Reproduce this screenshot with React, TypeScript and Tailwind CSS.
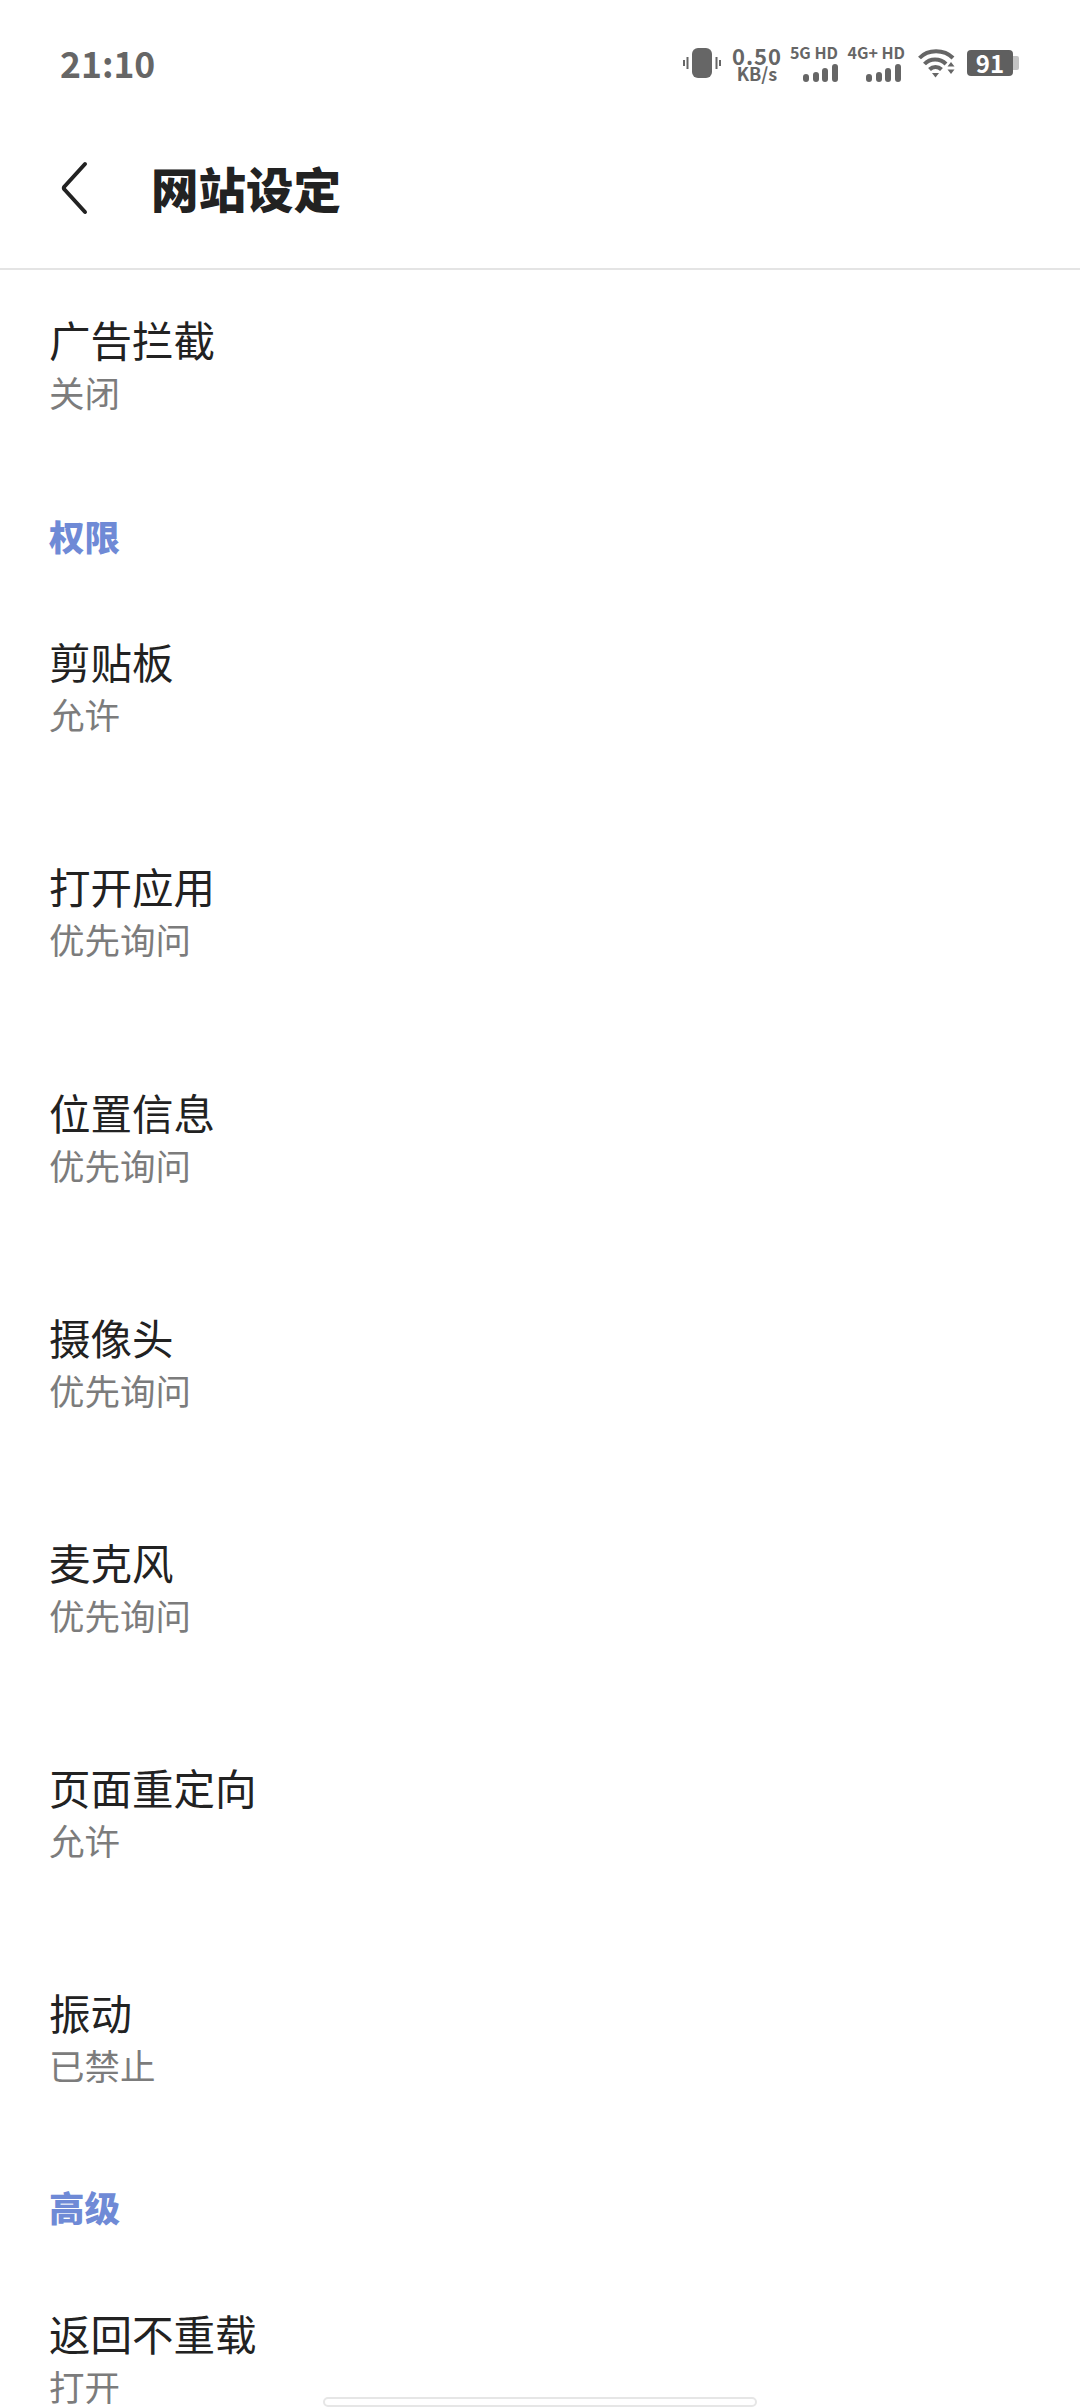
function Bars() {
  return (
    <svg width="35" height="18" viewBox="0 0 35 18" className="block" fill="#666">
      <rect x="0" y="10" width="6" height="8" rx="3" />
      <rect x="10" y="8" width="6" height="10" rx="3" />
      <rect x="19" y="4" width="6" height="14" rx="3" />
      <rect x="29" y="0" width="6" height="18" rx="3" />
    </svg>
  );
}

function Net({ label, className, barClass }: { label: string; className: string; barClass: string }) {
  return (
    <div className={`flex flex-col items-end ${className}`}>
      <div className="text-[16px] leading-[15px] font-bold text-[#666] whitespace-nowrap">{label}</div>
      <div className={`mt-[4px] ${barClass}`}><Bars /></div>
    </div>
  );
}

function StatusBar() {
  return (
    <div className="h-[90px] pl-[60px] pr-[61px] pt-[42px] flex justify-between items-start">
      <div className="text-[35.500px] leading-[42px] font-bold text-[#666]">21:10</div>
      <div className="flex items-center h-[42px]">
        <svg width="38" height="32" viewBox="0 0 38 32" fill="none" className="block">
          <rect x="9" y="1" width="20" height="30" rx="6" fill="#666" />
          <path d="M4.500 10v12M1 13v6M33.500 10v12M37 13v6" stroke="#666" strokeWidth="2" />
        </svg>
        <div className="ml-[11px] flex flex-col items-center w-[50px]">
          <div className="text-[22px] leading-[19px] font-bold text-[#666] tracking-[1px]">0.50</div>
          <div className="text-[18px] leading-[16px] font-bold text-[#666]">KB/s</div>
        </div>
        <Net label="5G HD" className="ml-[10px] w-[46px]" barClass="mr-0" />
        <Net label="4G+ HD" className="ml-[11px] w-[56px]" barClass="mr-[4px]" />
        <svg width="38" height="30" viewBox="0 0 38 30" fill="none" className="block ml-[13px]">
          <path d="M1.500 10C10 1 26 1 35 10" stroke="#666" strokeWidth="4" />
          <path d="M6.500 16C12 10 22 10 28 16" stroke="#666" strokeWidth="4" />
          <path d="M11.500 21.500C15 18 20 18 23.500 21.500" stroke="#666" strokeWidth="4" />
          <path d="M14 25h7l-3.500 4.500z" fill="#666" />
          <path d="M33 14l3.500 4.500h-7zM29.500 21.500h7L33 26z" fill="#666" />
        </svg>
        <div className="ml-[11px] flex items-center">
          <div className="w-[46px] h-[26px] rounded-[4px] bg-[#5f5f5f] flex items-center justify-center text-white text-[24px] leading-[26px] font-bold">91</div>
          <div className="w-[6px] h-[14px] bg-[#c4c4c4] rounded-r-[2px]"></div>
        </div>
      </div>
    </div>
  );
}

function Row({ title, sub, className }: { title: string; sub: string; className: string }) {
  return (
    <div className={`pl-[49px] ${className}`}>
      <div className="text-[41.500px] leading-[50px] text-[#222]">{title}</div>
      <div className="mt-[7px] text-[35.500px] leading-[42px] text-[#7c7c7c]">{sub}</div>
    </div>
  );
}

function Section({ title, className }: { title: string; className: string }) {
  return <div className={`pl-[49px] text-[35.500px] leading-[48px] font-black text-[#6f8ad6] ${className}`}>{title}</div>;
}

export default function App() {
  return (
    <div
      className="relative w-[1080px] h-[2408px] overflow-hidden bg-white"
      style={{ fontFamily: '"Noto Sans CJK SC", "Noto Sans", sans-serif' }}
    >
      <StatusBar />
      <div className="h-[180px] border-b-2 border-[#e4e4e4] pl-[60px] pt-[18px] flex items-center gap-[63px]">
        <svg width="28" height="54" viewBox="0 0 28 54" fill="none" className="block shrink-0">
          <path d="M25 3L4.500 25.500Q3 27 4.500 28.500L25 51" stroke="#222" strokeWidth="4" strokeLinecap="round" strokeLinejoin="round" />
        </svg>
        <div className="text-[47.500px] leading-[60px] font-black text-[#222]">网站设定</div>
      </div>
      <Row title="广告拦截" sub="关闭" className="pt-[44px]" />
      <Section title="权限" className="mt-[99px]" />
      <Row title="剪贴板" sub="允许" className="mt-[76px]" />
      <Row title="打开应用" sub="优先询问" className="mt-[126px]" />
      <Row title="位置信息" sub="优先询问" className="mt-[127px]" />
      <Row title="摄像头" sub="优先询问" className="mt-[126px]" />
      <Row title="麦克风" sub="优先询问" className="mt-[126px]" />
      <Row title="页面重定向" sub="允许" className="mt-[126px]" />
      <Row title="振动" sub="已禁止" className="mt-[126px]" />
      <Section title="高级" className="mt-[97px]" />
      <Row title="返回不重载" sub="打开" className="mt-[77px]" />
      <div className="absolute left-[323px] top-[2397px] w-[434px] h-[10px] bg-white border-2 border-[#e6e6e6] rounded-[5px]"></div>
    </div>
  );
}
